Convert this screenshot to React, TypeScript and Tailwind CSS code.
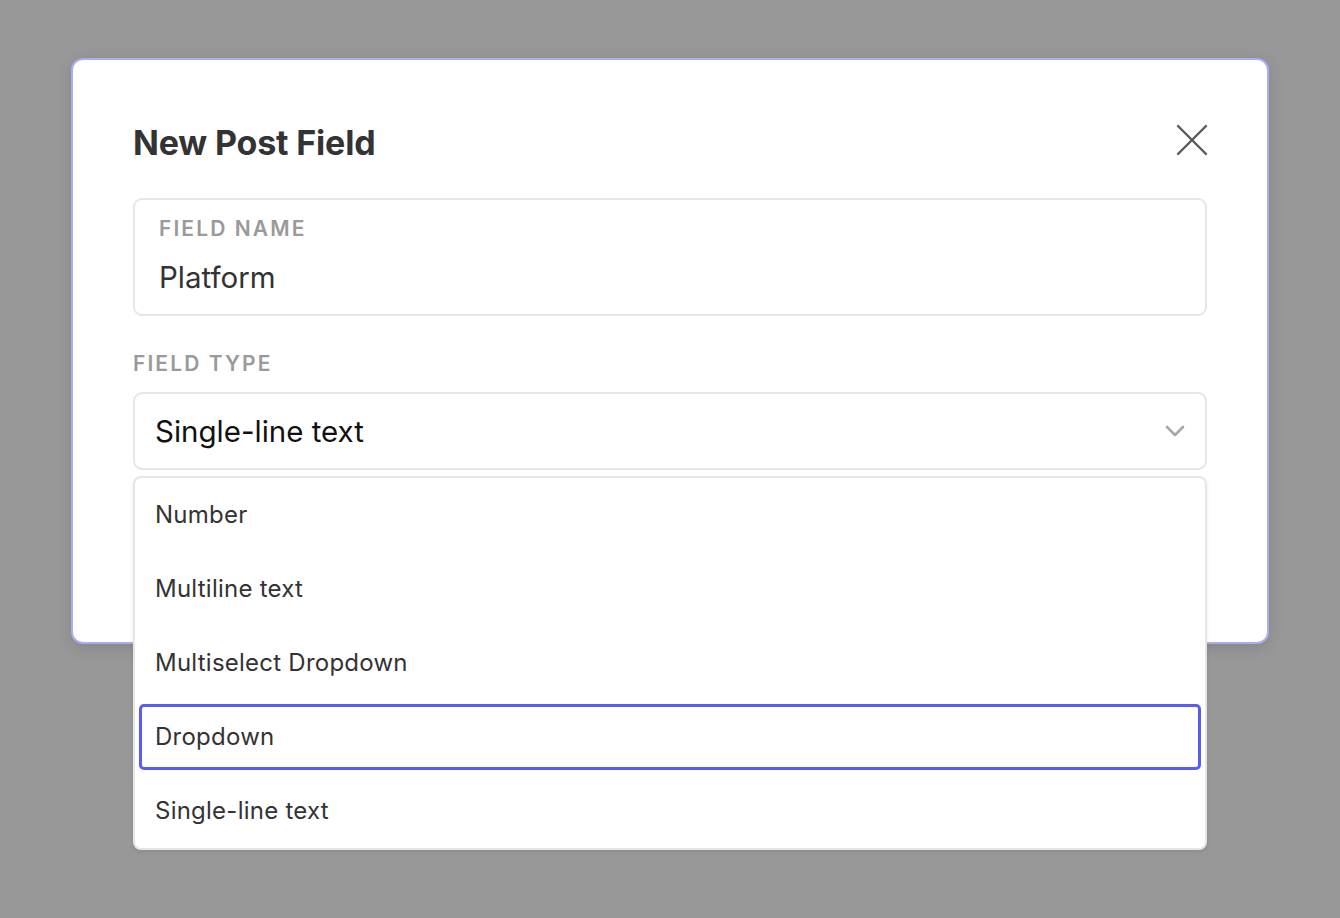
import { useState } from 'react'

const options = ['Number', 'Multiline text', 'Multiselect Dropdown', 'Dropdown', 'Single-line text']

function CloseIcon() {
  return (
    <svg width="32" height="32" viewBox="0 0 32 32" fill="none" stroke="#5a5a5a" strokeWidth="2.4" strokeLinecap="round">
      <path d="M2 2 L30 30" />
      <path d="M30 2 L2 30" />
    </svg>
  )
}

function Chevron() {
  return (
    <svg width="20" height="12" viewBox="0 0 20 12" fill="none" stroke="#a8a8a8" strokeWidth="2.6" strokeLinecap="round" strokeLinejoin="round">
      <path d="M2 2 L10 10 L18 2" />
    </svg>
  )
}

export default function App() {
  const [highlighted, setHighlighted] = useState('Dropdown')
  const [value, setValue] = useState('Single-line text')

  return (
    <div
      className="w-full h-[918px] bg-[#989898] flex justify-center pt-[58px] overflow-hidden"
      style={{ fontFamily: 'Inter, "Noto Sans", "Liberation Sans", sans-serif' }}
    >
      <div className="w-[1198px] h-[586px] bg-white rounded-[12px] border-2 border-[#aaacf7] shadow-[0_4px_16px_rgba(0,0,0,0.12)] px-[60px] pt-[60px] flex flex-col">
        {/* Header */}
        <div className="flex items-center justify-between h-[40px]">
          <h1 className="mt-[6px] text-[34px] leading-[40px] font-bold text-[#333333] tracking-[-0.005em]">New Post Field</h1>
          <button className="w-[32px] h-[32px] flex items-center justify-center mr-[-1px]">
            <CloseIcon />
          </button>
        </div>

        {/* Field name */}
        <div className="mt-[38px] h-[118px] rounded-[9px] border-2 border-[#e6e6e6] px-[24px] pt-[17px] flex flex-col">
          <p className="text-[21px] leading-[24px] font-semibold text-[#9a9a9a] tracking-[0.1em] uppercase">Field name</p>
          <p className="mt-[19px] text-[29.5px] leading-[34px] text-[#333333]">Platform</p>
        </div>

        {/* Field type */}
        <p className="mt-[36px] text-[21px] leading-[24px] font-semibold text-[#9a9a9a] tracking-[0.1em] uppercase">Field type</p>
        <div className="relative mt-[16px]">
          <button className="w-full h-[78px] rounded-[9px] border-2 border-[#e6e6e6] pl-[20px] pr-[20px] flex items-center justify-between bg-white">
            <span className="text-[29.5px] leading-[34px] text-[#111111]">{value}</span>
            <Chevron />
          </button>

          {/* Options list */}
          <div className="absolute left-0 right-0 top-[calc(100%+6px)] bg-white rounded-[8px] border-2 border-[#e6e6e6] shadow-[0_2px_4px_rgba(0,0,0,0.08)] z-10">
            {options.map((o) => (
              <div key={o} className="h-[74px] p-[4px]" onMouseEnter={() => setHighlighted(o)} onClick={() => setValue(o)}>
                <div
                  className={`h-full rounded-[5px] border-[3px] pl-[13px] flex items-center ${
                    highlighted === o ? 'border-[#575df4]' : 'border-transparent'
                  }`}
                >
                  <span className="text-[24px] leading-[28px] text-[#333333] tracking-[0.01em]">{o}</span>
                </div>
              </div>
            ))}
          </div>
        </div>
      </div>
    </div>
  )
}
